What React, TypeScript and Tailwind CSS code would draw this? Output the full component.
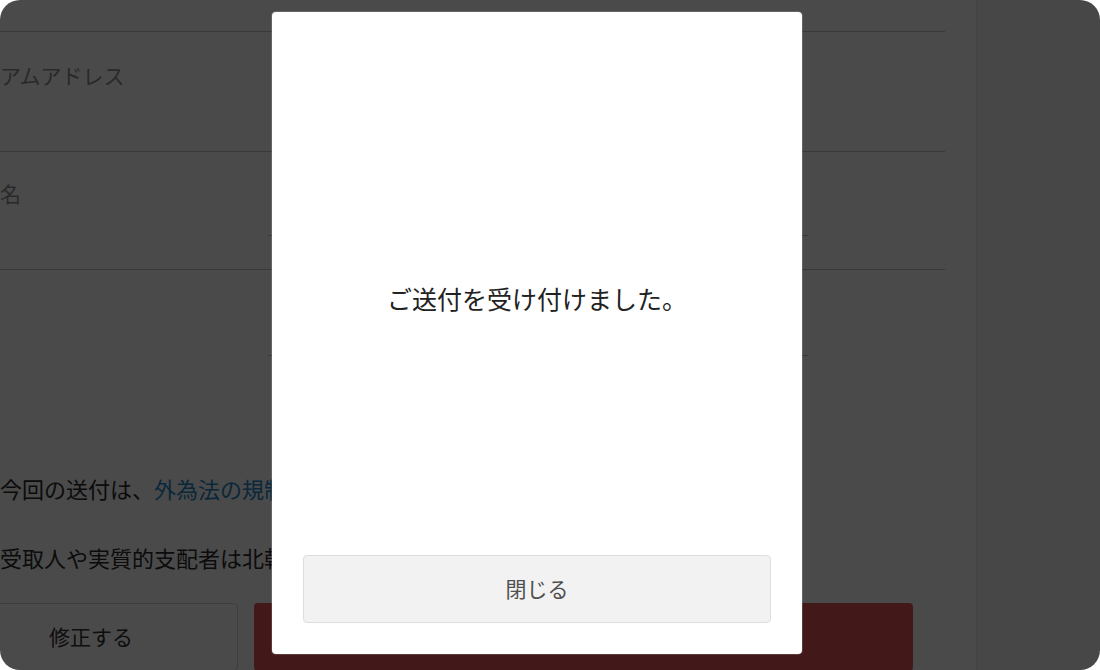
const font = { fontFamily: '"Noto Sans CJK JP", "Noto Sans", sans-serif' };

const FormRow = ({
  label,
  children,
  className = ""
}: {
  label: string;
  children?: React.ReactNode;
  className?: string;
}) => (
  <div className={`flex border-b border-[#c4c4c4] ${className}`}>
    <div className="w-[268px] shrink-0 text-[21px] leading-[30px] text-[#8f8f8f]">{label}</div>
    <div className="w-[540px]">{children}</div>
  </div>
);

const SentDialog = () => (
  <div className="absolute left-[272px] top-[12px] flex h-[642px] w-[530px] flex-col rounded-[4px] bg-white px-[31px] pb-[31px] shadow-[0_0_0_1px_rgba(255,255,255,0.15)]">
    <div className="flex h-[304px] shrink-0 items-end justify-center">
      <p className="text-[25px] leading-[36px] text-[#222]">ご送付を受け付けました。</p>
    </div>
    <div className="flex-1" />
    <button className="h-[68px] w-full rounded-[4px] border border-[#dedede] bg-[#f2f2f2] text-[21px] text-[#4f4f4f]">
      閉じる
    </button>
  </div>
);

export default function App() {
  return (
    <div className="h-[670px] w-[1100px] bg-white" style={font}>
      <div className="relative h-full w-full overflow-hidden rounded-[20px] bg-white">
        <div className="flex h-full">
          <main className="w-[976px] shrink-0">
            <div className="w-[945px]">
              <div className="h-[32px] border-b border-[#c4c4c4]">
                <div className="-translate-y-[26px] pl-[36px] text-[20px] leading-[30px] text-[#555]">ライセ</div>
              </div>
              <FormRow label="アムアドレス" className="h-[120px] pt-[28px]" />
              <FormRow label="名" className="h-[118px] pt-[26px]">
                <div className="border-b border-[#c4c4c4] pb-[27px] text-[20px] leading-[30px] text-[#333]">
                  ：山田 太郎
                </div>
              </FormRow>
              <div className="flex h-[86px]">
                <div className="w-[268px] shrink-0" />
                <div className="w-[540px] self-end border-b border-[#c4c4c4]" />
              </div>
            </div>

            <div className="mt-[116px] space-y-[37px] text-[22px] leading-[32px] text-[#2a2a2a]">
              <p>
                今回の送付は、<span className="text-[#1c86c8]">外為法の規制対象ではありません。</span>
              </p>
              <p>受取人や実質的支配者は北朝鮮等の関係者ではありません。</p>
            </div>

            <div className="mt-[30px] flex gap-[16px]">
              <button className="-ml-[56px] h-[68px] w-[294px] rounded-[4px] border border-[#d4d4d4] bg-white text-[21px] text-[#333]">
                修正する
              </button>
              <button className="h-[68px] w-[659px] rounded-[4px] bg-[#e85452] text-[21px] text-white">
                送付する
              </button>
            </div>
          </main>
          <aside className="flex-1 border-l border-[#e6e6e8] bg-[#f4f5f7]" />
        </div>

        <div className="absolute inset-0 bg-black/[0.71]" />
        <SentDialog />
      </div>
    </div>
  );
}
